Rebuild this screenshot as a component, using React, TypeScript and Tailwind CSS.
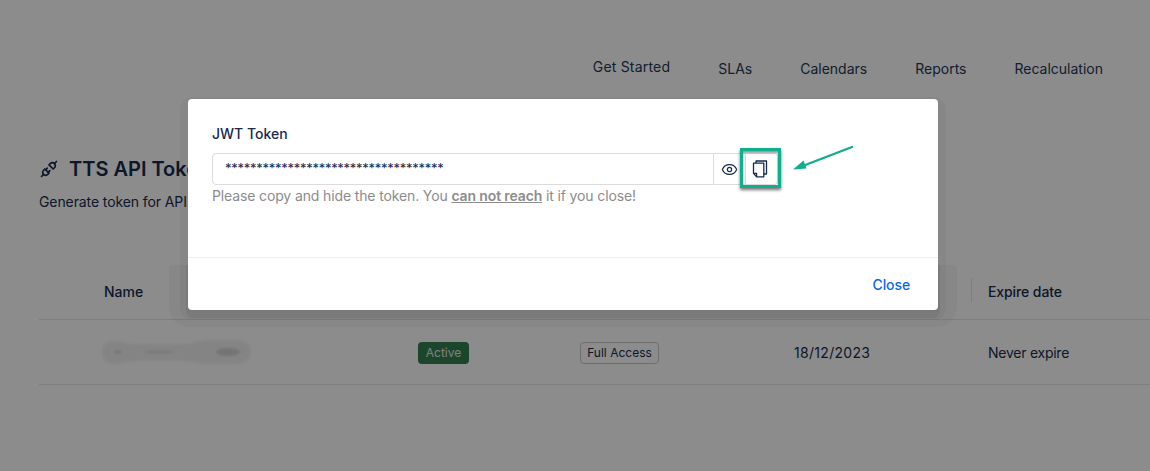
import { Eye } from 'lucide-react';
import { TbPlugConnected } from 'react-icons/tb';

const navItems = ['SLAs', 'Calendars', 'Reports', 'Recalculation'];

function CopyIcon() {
  return (
    <svg width="16" height="18" viewBox="0 0 16 18" fill="none" stroke="currentColor" strokeWidth="1.3" strokeLinejoin="round" className="-ml-[3px]">
      <path d="M4 3V1h10.5v13H12" />
      <path d="M4 3.2h7.8v13.6H4.6L1.5 13.4V3.2z" />
      <path d="M1.5 13.4h3.1v3.4" />
    </svg>
  );
}

function BlurredName() {
  return (
    <svg width="152" height="26" viewBox="0 0 152 26" className="block blur-[1px]">
      <path d="M12 2c8 0 12 3 20 3h50c10 0 14-4 26-4h26c10 0 16 5 16 12s-6 12-16 12h-26c-12 0-16-3-26-3H34c-8 0-14 3-22 3C6 25 1 19 1 13S6 2 12 2z" fill="#f1f1f1" />
      <ellipse cx="17" cy="13" rx="4" ry="2" fill="#dcdcdc" />
      <rect x="45" y="11.5" width="26" height="3" rx="1.5" fill="#e0e0e0" />
      <ellipse cx="127" cy="13" rx="12" ry="4" fill="#d4d4d4" />
    </svg>
  );
}

function TokenModal() {
  return (
    <div className="absolute inset-0 bg-black/45 pl-[188px] pt-[99px]">
      <div className="relative h-[211px] w-[750px]">
        <div className="absolute -left-[8px] -right-[8px] -top-[2px] bottom-[-10px] rounded-xl bg-black/[.03]" />
        <div className="absolute -left-[19px] -right-[19px] top-[166px] bottom-[-17px] rounded-b-[20px] rounded-t-sm bg-black/[.03]" />
        <div className="absolute -left-[2px] -right-[2px] top-[166px] bottom-[-8px] rounded-b-lg bg-black/[.06]" />
        <div className="relative flex h-full flex-col rounded bg-white">
          <div className="h-[159px] border-b border-[#eeeeee] px-6 pt-[27px]">
            <div className="text-[14px] leading-4 font-medium text-[#172b4d]">JWT Token</div>
            <div className="relative mt-[11px] flex h-8 w-[566px]">
              <div className="flex h-8 w-[502px] items-center rounded-l border border-[#dcdcdc] pl-3 text-[13px] tracking-[-0.27px] text-[#172b4d]">
                ***********************************
              </div>
              <div className="flex h-8 w-8 items-center justify-center border-y border-r border-[#dcdcdc] text-[#172b4d]">
                <Eye size={17} strokeWidth={1.7} />
              </div>
              <div className="flex h-8 w-8 items-center justify-center rounded-r border-y border-r border-[#dcdcdc] text-[#172b4d]">
                <CopyIcon />
              </div>
              <div className="absolute left-[528px] top-[-5px] h-[40px] w-[41px] border-[3px] border-[#0fae8c] shadow-[0_2px_3px_rgba(0,0,0,0.55),inset_0_2px_2px_rgba(0,0,0,0.4)]" />
              <svg className="absolute left-[578px] top-[-8px]" width="66" height="30" viewBox="0 0 66 30" fill="none">
                <path d="M62 2 10 22" stroke="#0fae8c" strokeWidth="2.4" strokeLinecap="round" />
                <path d="M3 24.5 13.5 15.5 16.5 23.5z" fill="#0fae8c" />
              </svg>
            </div>
            <p className="mt-[1px] text-[14px] leading-5 tracking-[-0.13px] text-[#8c8c8c]">
              Please copy and hide the token. You{' '}
              <span className="font-semibold underline">can not reach</span> it if you close!
            </p>
          </div>
          <div className="flex flex-1 items-center justify-end pr-7">
            <button className="text-[14px] font-medium tracking-[-0.1px] text-[#0c66e4]">Close</button>
          </div>
        </div>
      </div>
    </div>
  );
}

export default function App() {
  return (
    <div className="relative h-[471px] w-[1150px] overflow-hidden bg-white font-['Inter',sans-serif] text-[14px] text-[#172b4d]">
      <nav className="flex items-center justify-end gap-12 pr-[47px] pt-[59px] text-[#253858]">
        <span className="-mt-[4px] leading-4 tracking-[0.2px]">Get Started</span>
        {navItems.map((item) => (
          <span key={item} className="leading-5">
            {item}
          </span>
        ))}
      </nav>

      <div className="pl-[39px] pt-[78px]">
        <div className="flex items-center gap-[10px]">
          <TbPlugConnected size={20} />
          <h1 className="text-[20px] leading-6 font-semibold">TTS API Token</h1>
        </div>
        <p className="mt-[11px] leading-5 tracking-[-0.1px]">Generate token for API access</p>
      </div>

      <div className="mt-[44px] ml-[39px]">
        <div className="grid h-[64px] grid-cols-[949px_1fr] items-center border-b border-[#e6e6e6] pt-2 font-medium">
          <span className="pl-[65px]">Name</span>
          <span className="relative tracking-[-0.1px]">
            Expire date
            <span className="absolute -left-[17px] top-[-3px] h-6 w-px bg-[#e6e6e6]" />
          </span>
        </div>
        <div className="grid h-[65px] grid-cols-[379px_162px_214px_194px_1fr] items-center border-b border-[#e6e6e6]">
          <div className="pl-[62px]">
            <BlurredName />
          </div>
          <div>
            <span className="block w-[51px] translate-y-px rounded-sm bg-[#338050] text-center text-[12px] leading-[22px] text-[#e8e8e8]">Active</span>
          </div>
          <div>
            <span className="block w-[79px] translate-y-px rounded-sm border border-[#c9c9c9] text-center text-[12px] leading-5">Full Access</span>
          </div>
          <span className="tracking-[0.3px]">18/12/2023</span>
          <span className="tracking-[-0.25px]">Never expire</span>
        </div>
      </div>

      <TokenModal />
    </div>
  );
}
